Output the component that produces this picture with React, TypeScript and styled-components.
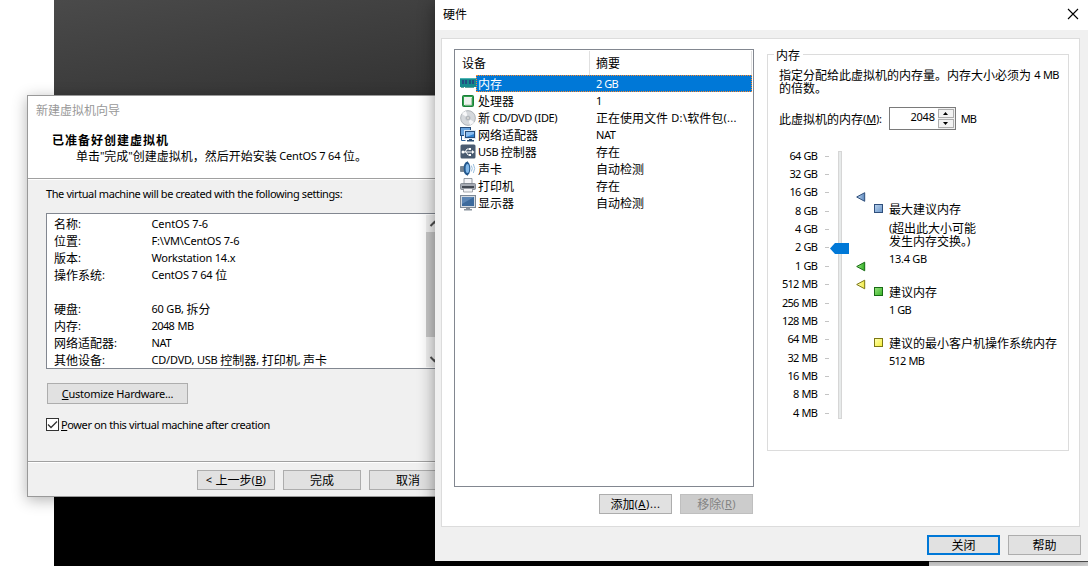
import React from "react";
import styled, { createGlobalStyle } from "styled-components";

const Global = createGlobalStyle`
  html, body { margin: 0; padding: 0; }
  body {
    width: 1088px; height: 566px; overflow: hidden; background: #fff;
    font-family: "Noto Sans CJK SC", sans-serif; font-size: 12px; line-height: 17px; color: #000;
  }
  *, *::before, *::after { box-sizing: border-box; }
`;

/* ---------- text ---------- */

const Line = styled.span<{ $ls?: number }>`
  display: block;
  white-space: pre;
  ${(p) => (p.$ls !== undefined ? `--latin-spacing: ${p.$ls}px;` : "")}
  ${(p) => (p.$ls !== undefined && p.$ls <= -0.5 ? "--latin-gap: 1px;" : "")}
`;
const Latin = styled.span`
  font-family: "Noto Sans", sans-serif;
  font-size: 11px;
  line-height: 1;
  vertical-align: 1px;
  letter-spacing: var(--latin-spacing, -0.2px);
  word-spacing: var(--latin-gap, 0);
`;
const Mnemonic = styled.span`
  text-decoration: underline;
  text-underline-offset: 1px;
  text-decoration-thickness: 1px;
`;

const isCjk = (c: string) => /[\u3000-\u9fff\uff00-\uffef]/.test(c);

/* Splits a caption into CJK and Latin runs; "&" marks the mnemonic letter. */
function Text({ children, ls }: { children: string; ls?: number }) {
  const runs = children.match(/&.|[\u3000-\u9fff\uff00-\uffef]+|[^&\u3000-\u9fff\uff00-\uffef]+/g) ?? [];
  return (
    <Line $ls={ls}>
      {runs.map((r, i) =>
        r[0] === "&" ? (
          <Latin key={i}><Mnemonic>{r[1]}</Mnemonic></Latin>
        ) : isCjk(r[0]) ? (
          r
        ) : (
          <Latin key={i}>{r}</Latin>
        )
      )}
    </Line>
  );
}

/* ---------- desktop ---------- */

const Desktop = styled.div`
  position: relative;
  width: 1088px;
  height: 566px;
  overflow: hidden;
  background: #fff;
`;
const Console = styled.div`
  position: absolute;
  left: 54px;
  top: 0;
  width: 875px;
  height: 566px;
  background: linear-gradient(170deg, #4a4a4a 0, #3a3a3a 110px, #101010 400px, #000 490px);
`;
const ConsoleShade = styled.div`
  position: absolute;
  left: 929px;
  top: 561px;
  width: 159px;
  height: 5px;
  background: #f4f4f4;
`;

const Button = styled.div<{ $w: number; $h?: number; $kind?: "default" | "disabled" }>`
  display: flex;
  align-items: center;
  justify-content: center;
  width: ${(p) => p.$w}px;
  height: ${(p) => p.$h ?? 20}px;
  padding-bottom: 1px;
  flex: none;
  background: ${(p) => (p.$kind === "disabled" ? "#ccc" : "#e1e1e1")};
  color: ${(p) => (p.$kind === "disabled" ? "#838383" : "#000")};
  border: ${(p) =>
    p.$kind === "default" ? "2px solid #0078d7" : p.$kind === "disabled" ? "1px solid #bfbfbf" : "1px solid #adadad"};
`;

/* ---------- wizard ---------- */

const WizardWindow = styled.div`
  position: absolute;
  left: 27px;
  top: 95px;
  width: 480px;
  height: 402px;
  display: flex;
  flex-direction: column;
  background: #f0f0f0;
  border: 1px solid #999;
  box-shadow: 0 3px 14px rgba(0, 0, 0, 0.3);
`;
const WizardTitle = styled.div`
  height: 30px;
  padding: 5px 0 0 8px;
  background: #fff;
  color: #999;
`;
const WizardHeader = styled.div`
  height: 53px;
  padding: 6px 0 0 24px;
  background: #fff;
  border-bottom: 1px solid #a0a0a0;
  line-height: 16px;
`;
const WizardHeading = styled.div`
  font-weight: 700;
  letter-spacing: 1px;
`;
const WizardSub = styled.div`
  padding-left: 24px;
`;
const WizardBody = styled.div`
  height: 283px;
  padding: 5px 0 0 18px;
  border-top: 1px solid #fff;
  border-bottom: 1px solid #a0a0a0;
`;
const SummaryBox = styled.div`
  display: flex;
  width: 398px;
  height: 156px;
  margin: 11px 0 14px;
  border: 1px solid #828790;
  background: #fff;
`;
const SummaryRows = styled.div`
  flex: none;
  width: 379px;
  padding: 1px 0 0 7px;
  overflow: hidden;
`;
const SummaryRow = styled.div`
  display: grid;
  grid-template-columns: 97.5px 1fr;
  height: 17px;
`;
const ScrollBar = styled.div`
  flex: none;
  width: 17px;
  margin: 1px 0;
  display: flex;
  flex-direction: column;
  justify-content: space-between;
  align-items: center;
  background: #f0f0f0;
`;
const ScrollThumb = styled.div`
  width: 17px;
  height: 105px;
  margin-bottom: 13px;
  background: #c8c8c8;
`;
const CustomizeRow = styled.div`
  padding-left: 1px;
`;
const CheckRow = styled.div`
  display: flex;
  align-items: center;
  gap: 2px;
  margin-top: 12px;
`;
const WizardFooter = styled.div`
  display: flex;
  gap: 8px;
  padding: 7px 0 0 169px;
  border-top: 1px solid #fff;
`;

const summary: [string, string, number?][] = [
  ["名称:", "CentOS 7-6", -0.1],
  ["位置:", "F:\\VM\\CentOS 7-6", -0.2],
  ["版本:", "Workstation 14.x"],
  ["操作系统:", "CentOS 7 64 位"],
  ["", ""],
  ["硬盘:", "60 GB, 拆分"],
  ["内存:", "2048 MB", -0.6],
  ["网络适配器:", "NAT", -0.3],
  ["其他设备:", "CD/DVD, USB 控制器, 打印机, 声卡"],
];

function Chevron({ down }: { down?: boolean }) {
  return (
    <svg width="17" height="17" viewBox="0 0 17 17">
      <path d={down ? "M4.5 7l4 4 4-4" : "M4.5 11l4-4 4 4"} fill="none" stroke="#505050" strokeWidth="2" />
    </svg>
  );
}

function Wizard() {
  return (
    <WizardWindow>
      <WizardTitle>新建虚拟机向导</WizardTitle>
      <WizardHeader>
        <WizardHeading>已准备好创建虚拟机</WizardHeading>
        <WizardSub><Text>{'单击"完成"创建虚拟机，然后开始安装 CentOS 7 64 位。'}</Text></WizardSub>
      </WizardHeader>
      <WizardBody>
        <Text ls={-0.4}>The virtual machine will be created with the following settings:</Text>
        <SummaryBox>
          <SummaryRows>
            {summary.map(([k, v, ls], i) => (
              <SummaryRow key={i}>
                <Text>{k}</Text>
                <Text ls={ls}>{v}</Text>
              </SummaryRow>
            ))}
          </SummaryRows>
          <ScrollBar>
            <Chevron />
            <ScrollThumb />
            <Chevron down />
          </ScrollBar>
        </SummaryBox>
        <CustomizeRow>
          <Button $w={141} $h={21}><Text ls={-0.25}>&Customize Hardware...</Text></Button>
        </CustomizeRow>
        <CheckRow>
          <svg width="13" height="13" viewBox="0 0 13 13">
            <rect x="0.5" y="0.5" width="12" height="12" fill="#fff" stroke="#333" />
            <path d="M2 6.500l3 3 6-6" fill="none" stroke="#333" strokeWidth="1.300" />
          </svg>
          <Text ls={-0.39}>&Power on this virtual machine after creation</Text>
        </CheckRow>
      </WizardBody>
      <WizardFooter>
        <Button $w={78}><Text ls={0.3}>{"< 上一步(&B)"}</Text></Button>
        <Button $w={78}>完成</Button>
        <Button $w={78}>取消</Button>
      </WizardFooter>
    </WizardWindow>
  );
}

/* ---------- hardware dialog ---------- */

const HardwareWindow = styled.div`
  position: absolute;
  left: 435px;
  top: 0;
  width: 660px;
  height: 561px;
  display: flex;
  flex-direction: column;
  background: #f0f0f0;
  box-shadow: 0 0 1px 0.5px rgba(0, 0, 0, 0.6), 0 3px 16px rgba(0, 0, 0, 0.42);
`;
const HardwareTitle = styled.div`
  display: flex;
  align-items: flex-start;
  justify-content: space-between;
  height: 30px;
  padding: 5px 16px 0 8px;
  background: #fff;
`;
const CloseGlyph = styled.svg`
  margin-top: 1px;
`;
const HardwarePanel = styled.div`
  display: flex;
  align-items: flex-start;
  width: 639px;
  height: 489px;
  margin: 8px 0 0 6px;
  padding: 10px 0 0 12px;
  background: #fff;
  border: 1px solid #dcdcdc;
`;
const DeviceColumn = styled.div`
  width: 300px;
  margin-right: 13px;
`;
const DeviceList = styled.div`
  height: 438px;
  padding: 1px;
  border: 1px solid #828790;
`;
const ListHeader = styled.div`
  display: grid;
  grid-template-columns: 134px 162px;
  height: 24px;
`;
const HeaderCell = styled.div`
  padding: 3px 0 0 6px;
  border-right: 1px solid #e0e0e0;
`;
const DeviceRow = styled.div`
  display: grid;
  grid-template-columns: 16px 1fr;
  height: 17px;
  padding: 0 0 0 4px;
`;
const DeviceIcon = styled.svg`
  display: block;
  margin-top: 1px;
`;
const DeviceCells = styled.div<{ $selected?: boolean }>`
  display: grid;
  grid-template-columns: 118px 1fr;
  padding-left: 2px;
  line-height: 17px;
  background: ${(p) => (p.$selected ? "#0078d7" : "transparent")};
  color: ${(p) => (p.$selected ? "#fff" : "#000")};
  outline: ${(p) => (p.$selected ? "1px dotted #ff8728" : "none")};
  outline-offset: -1px;
`;
const ListButtons = styled.div`
  display: flex;
  justify-content: flex-end;
  gap: 8px;
  padding: 7px 1px 0 0;
`;
const DialogFooter = styled.div`
  display: flex;
  gap: 8px;
  padding: 8px 0 0 492px;
`;

const GroupBox = styled.fieldset`
  width: 302px;
  height: 405px;
  margin: 0;
  margin-top: -3px;
  padding: 0 0 0 11px;
  border: 1px solid #dcdcdc;
  min-width: 0;
`;
const GroupLegend = styled.legend`
  margin-left: -5px;
  padding: 0 3px 0 2px;
  line-height: 17px;
`;
const Description = styled.div`
  height: 36px;
  padding-top: 5px;
  line-height: 13px;
`;
const AmountRow = styled.div`
  display: flex;
  align-items: center;
  height: 23px;
  margin-top: 8px;
`;
const Spin = styled.div`
  display: flex;
  justify-content: flex-end;
  width: 67px;
  height: 23px;
  margin: 0 5px 0 7px;
  border: 1px solid #7a7a7a;
  background: #fff;
`;
const SpinValue = styled.div`
  padding: 0 3px 0 0;
`;
const SpinButtons = styled.div`
  display: flex;
  flex-direction: column;
  gap: 1px;
  width: 17px;
  padding: 1px 1px 1px 0;
  background: #f0f0f0;
`;
const SpinButton = styled.div`
  display: flex;
  align-items: center;
  justify-content: center;
  height: 9px;
  border: 1px solid #adadad;
  background: #f3f3f3;
`;
const MemoryScale = styled.div`
  display: flex;
  align-items: flex-start;
  margin-top: 16px;
`;
const ScaleLabels = styled.div`
  width: 38px;
`;
const ScaleLabel = styled.div`
  display: flex;
  justify-content: flex-end;
  align-items: center;
  height: 18.36px;
`;
const Ticks = styled.div`
  width: 5px;
  margin: 1px 0 0 8px;
`;
const Tick = styled.div`
  display: flex;
  align-items: center;
  height: 18.36px;
  &::before {
    content: "";
    width: 4px;
    height: 1px;
    background: #c4c4c4;
  }
`;
const SliderTrack = styled.svg`
  margin-top: 2px;
`;
const Legends = styled.div`
  display: flex;
  flex-direction: column;
  gap: 16px;
  margin: 54px 0 0 7px;
`;
const LegendItem = styled.div`
  display: grid;
  grid-template-columns: 10px auto;
  column-gap: 5px;
  align-items: start;
`;
const Swatch = styled.div<{ $c: string; $light: string; $edge: string }>`
  width: 9px;
  height: 9px;
  margin-top: 4px;
  border: 1px solid ${(p) => p.$edge};
  background: linear-gradient(135deg, ${(p) => p.$light}, ${(p) => p.$c});
`;
const LegendNote = styled.div`
  padding: 4px 0 2px;
  line-height: 13px;
`;
const LegendValue = styled.div`
  padding-top: 1px;
`;

const scale = ["64 GB", "32 GB", "16 GB", "8 GB", "4 GB", "2 GB", "1 GB", "512 MB", "256 MB", "128 MB", "64 MB", "32 MB", "16 MB", "8 MB", "4 MB"];

const icons: Record<string, React.ReactNode> = {
  memory: (
    <>
      <path d="M0 2h16v9H0z" fill="#168a8c" />
      <path d="M0 2h16v1H0z" fill="#4db5b5" />
      <path d="M2 4h2v4H2zM5 4h2v4H5zM9 4h2v4H9zM12 4h2v4h-2z" fill="#214e83" />
      <path d="M1 11h3v1H1zM5 11h9v1H5z" fill="#62a39b" />
    </>
  ),
  cpu: (
    <>
      <rect x="2.5" y="2.5" width="11" height="11" rx="1" fill="#2fa04c" stroke="#1b7d38" />
      <rect x="4" y="4" width="8" height="8" fill="#eef2ee" />
      <path d="M11.5 5v7H5" fill="none" stroke="#b4c8b6" />
    </>
  ),
  disc: (
    <>
      <circle cx="8" cy="8" r="7.4" fill="#d5d8dc" stroke="#9a9fa5" strokeWidth="0.7" />
      <path d="M8 8L2 4a7 7 0 0 1 4-3zM8 8l6 4a7 7 0 0 1-4 3z" fill="#f8f8fa" />
      <circle cx="8" cy="8" r="2.6" fill="#bbc0c6" />
      <circle cx="8" cy="8" r="1.2" fill="#fff" stroke="#888" strokeWidth="0.5" />
    </>
  ),
  network: (
    <>
      <rect x="0.5" y="0.5" width="10" height="8" fill="#6ba5df" stroke="#264b78" />
      <path d="M1.5 9v4.500h4" fill="none" stroke="#2c5e95" />
      <rect x="4.5" y="3.5" width="11" height="8" fill="#2f80cf" stroke="#dce8f4" />
      <rect x="5.5" y="4.5" width="9" height="6" fill="#2f80cf" stroke="#264b78" />
      <path d="M6 5h8v2l-8 3z" fill="#8abdf0" />
      <path d="M9 12h3v1h2v1.500H7V13h2z" fill="#2e4f74" />
    </>
  ),
  usb: (
    <>
      <rect x="0.5" y="0.500" width="15" height="14" rx="1.500" fill="#4a5b71" />
      <path d="M3 8h10M5 8l2-3h3M6 8l2 3h2" fill="none" stroke="#fff" />
      <circle cx="3" cy="8" r="1.5" fill="#fff" />
      <path d="M12 6l2.500 2L12 10zM9 4h2v2H9zM9 10h2v2H9z" fill="#fff" />
    </>
  ),
  sound: (
    <>
      <path d="M0.500 5.500h3l4-5v14l-4-4h-3z" fill="#75828f" stroke="#536270" strokeWidth="0.6" />
      <ellipse cx="7" cy="7.5" rx="3.300" ry="6.8" fill="#23598f" />
      <ellipse cx="7.4" cy="7.5" rx="1.800" ry="4.500" fill="#82b9ea" />
      <path d="M11.3 4.500q2 3 0 6M13.3 3q2.800 4.500 0 9" fill="none" stroke="#9bbfdf" />
    </>
  ),
  printer: (
    <>
      <path d="M4 0.500h8V6H4z" fill="#f5f5f7" stroke="#7e858e" strokeWidth="0.8" />
      <rect x="0.5" y="5.5" width="15" height="6" rx="1" fill="#a6abb3" stroke="#6b727b" strokeWidth="0.7" />
      <path d="M2 8h12v2H2z" fill="#434952" />
      <path d="M3.500 10.500h9V14h-9z" fill="#f4f4f6" stroke="#82878e" strokeWidth="0.7" />
    </>
  ),
  display: (
    <>
      <rect x="0.5" y="0.5" width="15" height="12" fill="#d5dbe2" stroke="#7e8995" />
      <rect x="2" y="2" width="12" height="9" fill="#3c6a9c" />
      <path d="M2 2h12L2 9z" fill="#5c86b5" />
      <path d="M6 13h4v1h2v1.500H4V14h2z" fill="#8a939d" />
    </>
  ),
};

const devices: [string, string, string, number?][] = [
  ["memory", "内存", "2 GB", -0.9],
  ["cpu", "处理器", "1"],
  ["disc", "新 CD/DVD (IDE)", "正在使用文件 D:\\软件包(...", 0.35],
  ["network", "网络适配器", "NAT", -0.4],
  ["usb", "USB 控制器", "存在"],
  ["sound", "声卡", "自动检测"],
  ["printer", "打印机", "存在"],
  ["display", "显示器", "自动检测"],
];

function Slider() {
  return (
    <SliderTrack width="37" height="272" viewBox="0 0 37 272">
      <defs>
        <linearGradient id="blue"><stop offset="0" stopColor="#c6dcf2" /><stop offset="1" stopColor="#5b87bd" /></linearGradient>
        <linearGradient id="green"><stop offset="0" stopColor="#a6eb8e" /><stop offset="1" stopColor="#2cae20" /></linearGradient>
        <linearGradient id="yellow"><stop offset="0" stopColor="#fffdc4" /><stop offset="1" stopColor="#f0ea40" /></linearGradient>
      </defs>
      <rect x="8.5" y="3.5" width="3" height="267" fill="#e7eaea" stroke="#d6d6d6" />
      <path d="M0 100.5L5 95h14v11H5z" fill="#0078d7" />
      <path d="M26.7 49l8-4.3v8.6z" fill="url(#blue)" stroke="#2f4f7c" />
      <path d="M26.7 118.500l8-4.300v8.600z" fill="url(#green)" stroke="#176b14" />
      <path d="M26.7 136.500l8-4.300v8.600z" fill="url(#yellow)" stroke="#7c7814" />
    </SliderTrack>
  );
}

function Hardware() {
  return (
    <HardwareWindow>
      <HardwareTitle>
        硬件
        <CloseGlyph width="12" height="16" viewBox="0 0 12 16">
          <path d="M1 3l10 10M11 3L1 13" stroke="#000" strokeWidth="1.1" />
        </CloseGlyph>
      </HardwareTitle>
      <HardwarePanel>
        <DeviceColumn>
          <DeviceList>
            <ListHeader>
              <HeaderCell>设备</HeaderCell>
              <HeaderCell>摘要</HeaderCell>
            </ListHeader>
            {devices.map(([icon, name, note, ls], i) => (
              <DeviceRow key={icon}>
                <DeviceIcon width="16" height="16" viewBox="0 0 16 16">{icons[icon]}</DeviceIcon>
                <DeviceCells $selected={i === 0}>
                  <Text ls={-0.35}>{name}</Text>
                  <Text ls={ls}>{note}</Text>
                </DeviceCells>
              </DeviceRow>
            ))}
          </DeviceList>
          <ListButtons>
            <Button $w={73} $h={20}><Text ls={0.6}>添加(&A)...</Text></Button>
            <Button $w={73} $h={20} $kind="disabled"><Text ls={0.4}>移除(&R)</Text></Button>
          </ListButtons>
        </DeviceColumn>
        <GroupBox>
          <GroupLegend>内存</GroupLegend>
          <Description>
            <Text ls={-0.7}>指定分配给此虚拟机的内存量。内存大小必须为 4 MB</Text>
            <Text>的倍数。</Text>
          </Description>
          <AmountRow>
            <Text>此虚拟机的内存(&M):</Text>
            <Spin>
              <SpinValue><Text>2048</Text></SpinValue>
              <SpinButtons>
                <SpinButton><svg width="5" height="3" viewBox="0 0 5 3"><path d="M0 3l2.500-3L5 3z" /></svg></SpinButton>
                <SpinButton><svg width="5" height="3" viewBox="0 0 5 3"><path d="M0 0l2.500 3L5 0z" /></svg></SpinButton>
              </SpinButtons>
            </Spin>
            <Text ls={-1}>MB</Text>
          </AmountRow>
          <MemoryScale>
            <ScaleLabels>
              {scale.map((s) => <ScaleLabel key={s}><Text ls={-0.8}>{s}</Text></ScaleLabel>)}
            </ScaleLabels>
            <Ticks>{scale.map((s) => <Tick key={s} />)}</Ticks>
            <Slider />
            <Legends>
              <LegendItem>
                <Swatch $light="#b5cfeb" $c="#6f99cb" $edge="#2f4f7c" />
                <div>
                  <Text>最大建议内存</Text>
                  <LegendNote>
                    <Text>(超出此大小可能</Text>
                    <Text>发生内存交换。)</Text>
                  </LegendNote>
                  <LegendValue><Text ls={-0.3}>13.4 GB</Text></LegendValue>
                </div>
              </LegendItem>
              <LegendItem>
                <Swatch $light="#93e07a" $c="#3cb62c" $edge="#176b14" />
                <div>
                  <Text>建议内存</Text>
                  <LegendValue><Text ls={-0.9}>1 GB</Text></LegendValue>
                </div>
              </LegendItem>
              <LegendItem>
                <Swatch $light="#ffffb0" $c="#f5ee3c" $edge="#7c7814" />
                <div>
                  <Text>建议的最小客户机操作系统内存</Text>
                  <LegendValue><Text ls={-0.8}>512 MB</Text></LegendValue>
                </div>
              </LegendItem>
            </Legends>
          </MemoryScale>
        </GroupBox>
      </HardwarePanel>
      <DialogFooter>
        <Button $w={73} $kind="default">关闭</Button>
        <Button $w={73}>帮助</Button>
      </DialogFooter>
    </HardwareWindow>
  );
}

export default function App() {
  return (
    <>
      <Global />
      <Desktop>
        <Console />
        <ConsoleShade />
        <Wizard />
        <Hardware />
      </Desktop>
    </>
  );
}
